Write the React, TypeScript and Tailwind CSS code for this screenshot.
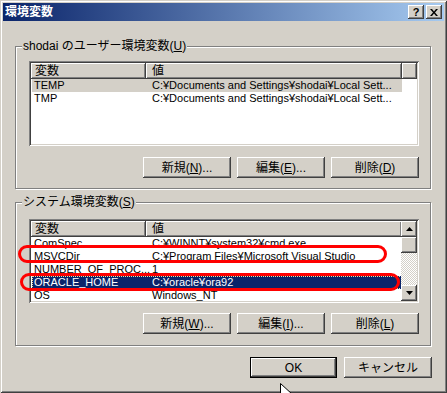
import type { ReactNode } from 'react';

const raised = 'shadow-[inset_-1px_-1px_#404040,inset_1px_1px_#fff,inset_-2px_-2px_#808080,inset_2px_2px_#d4d0c8]';
const sunken = 'shadow-[inset_1px_1px_#808080,inset_-1px_-1px_#fff,inset_2px_2px_#404040,inset_-2px_-2px_#d4d0c8]';

type Row = { name: string; value: string; state?: 'inactive' | 'active' };

const userRows: Row[] = [
  { name: 'TEMP', value: 'C:¥Documents and Settings¥shodai¥Local Sett...', state: 'inactive' },
  { name: 'TMP', value: 'C:¥Documents and Settings¥shodai¥Local Sett...' },
];

const systemRows: Row[] = [
  { name: 'ComSpec', value: 'C:¥WINNT¥system32¥cmd.exe' },
  { name: 'MSVCDir', value: 'C:¥Program Files¥Microsoft Visual Studio' },
  { name: 'NUMBER_OF_PROC...', value: '1' },
  { name: 'ORACLE_HOME', value: 'C:¥oracle¥ora92', state: 'active' },
  { name: 'OS', value: 'Windows_NT' },
];

function Btn({ children, isDefault }: { children: ReactNode; isDefault?: boolean }) {
  return (
    <div
      className={`flex h-[21px] items-center justify-center bg-[#d4d0c8] text-[12px] leading-none text-black ${raised} ${
        isDefault ? 'w-[87px] border border-black' : 'w-[88px]'
      }`}
    >
      {children}
    </div>
  );
}

function GroupBox({ label, children, className }: { label: ReactNode; children: ReactNode; className: string }) {
  return (
    <div className={`relative w-[416px] border border-[#808080] shadow-[1px_1px_0_#fff,inset_1px_1px_0_#fff] ${className}`}>
      <span className="absolute left-[6px] top-[-8px] bg-[#d4d0c8] px-[1px] text-[12px] leading-[14px] text-black">{label}</span>
      {children}
    </div>
  );
}

function HeaderCell({ children, w }: { children?: ReactNode; w: string }) {
  return (
    <div className={`flex h-[16px] shrink-0 items-center bg-[#d4d0c8] pl-[4px] text-[12px] leading-none text-black ${raised} ${w}`}>
      {children}
    </div>
  );
}

function ListRow({ row }: { row: Row }) {
  const tone =
    row.state === 'active'
      ? 'bg-[#0a246a] text-white outline-1 outline-dotted outline-[#f0e0a0] -outline-offset-1'
      : row.state === 'inactive'
        ? 'bg-[#d4d0c8] text-black'
        : 'text-black';
  return (
    <div className={`flex h-[13px] w-[370px] shrink-0 items-center text-[11px] leading-[13px] ${tone}`}>
      <div className="w-[114px] shrink-0 pl-[2px] whitespace-nowrap">{row.name}</div>
      <div className="pl-[6px] whitespace-nowrap">{row.value}</div>
    </div>
  );
}

function ScrollBar() {
  return (
    <div className="flex w-[16px] shrink-0 flex-col">
      <div className={`flex h-[16px] items-center justify-center bg-[#d4d0c8] ${raised}`}>
        <svg width="7" height="4" viewBox="0 0 7 4"><path d="M3.5 0L7 4H0z" fill="#000" /></svg>
      </div>
      <div className={`h-[16px] bg-[#d4d0c8] ${raised}`} />
      <div className="flex-1 bg-[repeating-conic-gradient(#fff_0_25%,#d4d0c8_0_50%)] bg-[length:2px_2px]" />
      <div className={`flex h-[16px] items-center justify-center bg-[#d4d0c8] ${raised}`}>
        <svg width="7" height="4" viewBox="0 0 7 4"><path d="M0 0H7L3.5 4z" fill="#000" /></svg>
      </div>
    </div>
  );
}

function ListView({ rows, scroll, h }: { rows: Row[]; scroll?: boolean; h: string }) {
  return (
    <div className={`flex w-[390px] bg-white p-[2px] ${sunken} ${h}`}>
      <div className="flex min-w-0 flex-1 flex-col overflow-hidden">
        <div className="flex">
          <HeaderCell w="w-[115px]">変数</HeaderCell>
          <HeaderCell w="w-[256px] pl-[6px]">値</HeaderCell>
          {!scroll && <HeaderCell w="flex-1" />}
        </div>
        <div className="flex flex-col pl-[1px]">
          {rows.map((r) => (
            <ListRow key={r.name} row={r} />
          ))}
        </div>
      </div>
      {scroll && <ScrollBar />}
    </div>
  );
}

function Cursor() {
  return (
    <svg className="absolute left-[280px] top-[383px]" width="12" height="19" viewBox="0 0 12 19">
      <path d="M0.5 0.5V16.5L4.5 12.5L7 18.5L9.5 17.5L7 11.5H12.5Z" fill="#fff" stroke="#000" strokeWidth="1" />
    </svg>
  );
}

export default function App() {
  return (
    <div className="relative h-[393px] w-[447px] overflow-hidden bg-[#d4d0c8] font-['Liberation_Sans','Noto_Sans_CJK_JP',sans-serif]">
      <div className="flex h-full flex-col p-[3px] shadow-[inset_1px_1px_#d4d0c8,inset_-1px_-1px_#404040,inset_2px_2px_#fff,inset_-2px_-2px_#808080]">
        <div className="flex h-[18px] shrink-0 items-center justify-between bg-[linear-gradient(to_right,#0a246a,#a6caf0)] pl-[2px] pr-[2px]">
          <span className="text-[12px] font-bold leading-none text-white">環境変数</span>
          <div className="flex gap-[2px]">
            <div className={`flex h-[14px] w-[16px] items-center justify-center bg-[#d4d0c8] text-[11px] font-bold leading-none text-black ${raised}`}>?</div>
            <div className={`flex h-[14px] w-[16px] items-center justify-center bg-[#d4d0c8] ${raised}`}>
              <svg width="8" height="7" viewBox="0 0 8 7">
                <path d="M0 0h2l2 2.5L6 0h2L5 3.5 8 7H6L4 4.5 2 7H0l3-3.5z" fill="#000" />
              </svg>
            </div>
          </div>
        </div>

        <div className="flex flex-col px-[12px]">
          <GroupBox
            className="mt-[25px] pb-[10px] pl-[13px] pt-[14px]"
            label={
              <>
                shodai のユーザー環境変数(<u>U</u>)
              </>
            }
          >
            <ListView rows={userRows} h="h-[85px]" />
            <div className="mt-[11px] flex w-[390px] justify-end gap-[6px]">
              <Btn>新規(<u>N</u>)...</Btn>
              <Btn>編集(<u>E</u>)...</Btn>
              <Btn>削除(<u>D</u>)</Btn>
            </div>
          </GroupBox>

          <GroupBox
            className="mt-[13px] pb-[11px] pl-[13px] pt-[16px]"
            label={
              <>
                システム環境変数(<u>S</u>)
              </>
            }
          >
            <ListView rows={systemRows} scroll h="h-[84px]" />
            <div className="mt-[10px] flex w-[390px] justify-end gap-[6px]">
              <Btn>新規(<u>W</u>)...</Btn>
              <Btn>編集(<u>I</u>)...</Btn>
              <Btn>削除(<u>L</u>)</Btn>
            </div>
          </GroupBox>

          <div className="mt-[11px] flex w-[417px] justify-end gap-[7px]">
            <Btn isDefault>OK</Btn>
            <Btn>キャンセル</Btn>
          </div>
        </div>
      </div>

      {/* red marks over the screenshot */}
      <div className="absolute left-[18px] top-[245px] h-[18px] w-[369px] rounded-full border-[3px] border-[#ff0000]" />
      <div className="absolute left-[20px] top-[273px] h-[18px] w-[380px] rounded-full border-[3px] border-[#ff0000]" />
      <Cursor />
    </div>
  );
}
